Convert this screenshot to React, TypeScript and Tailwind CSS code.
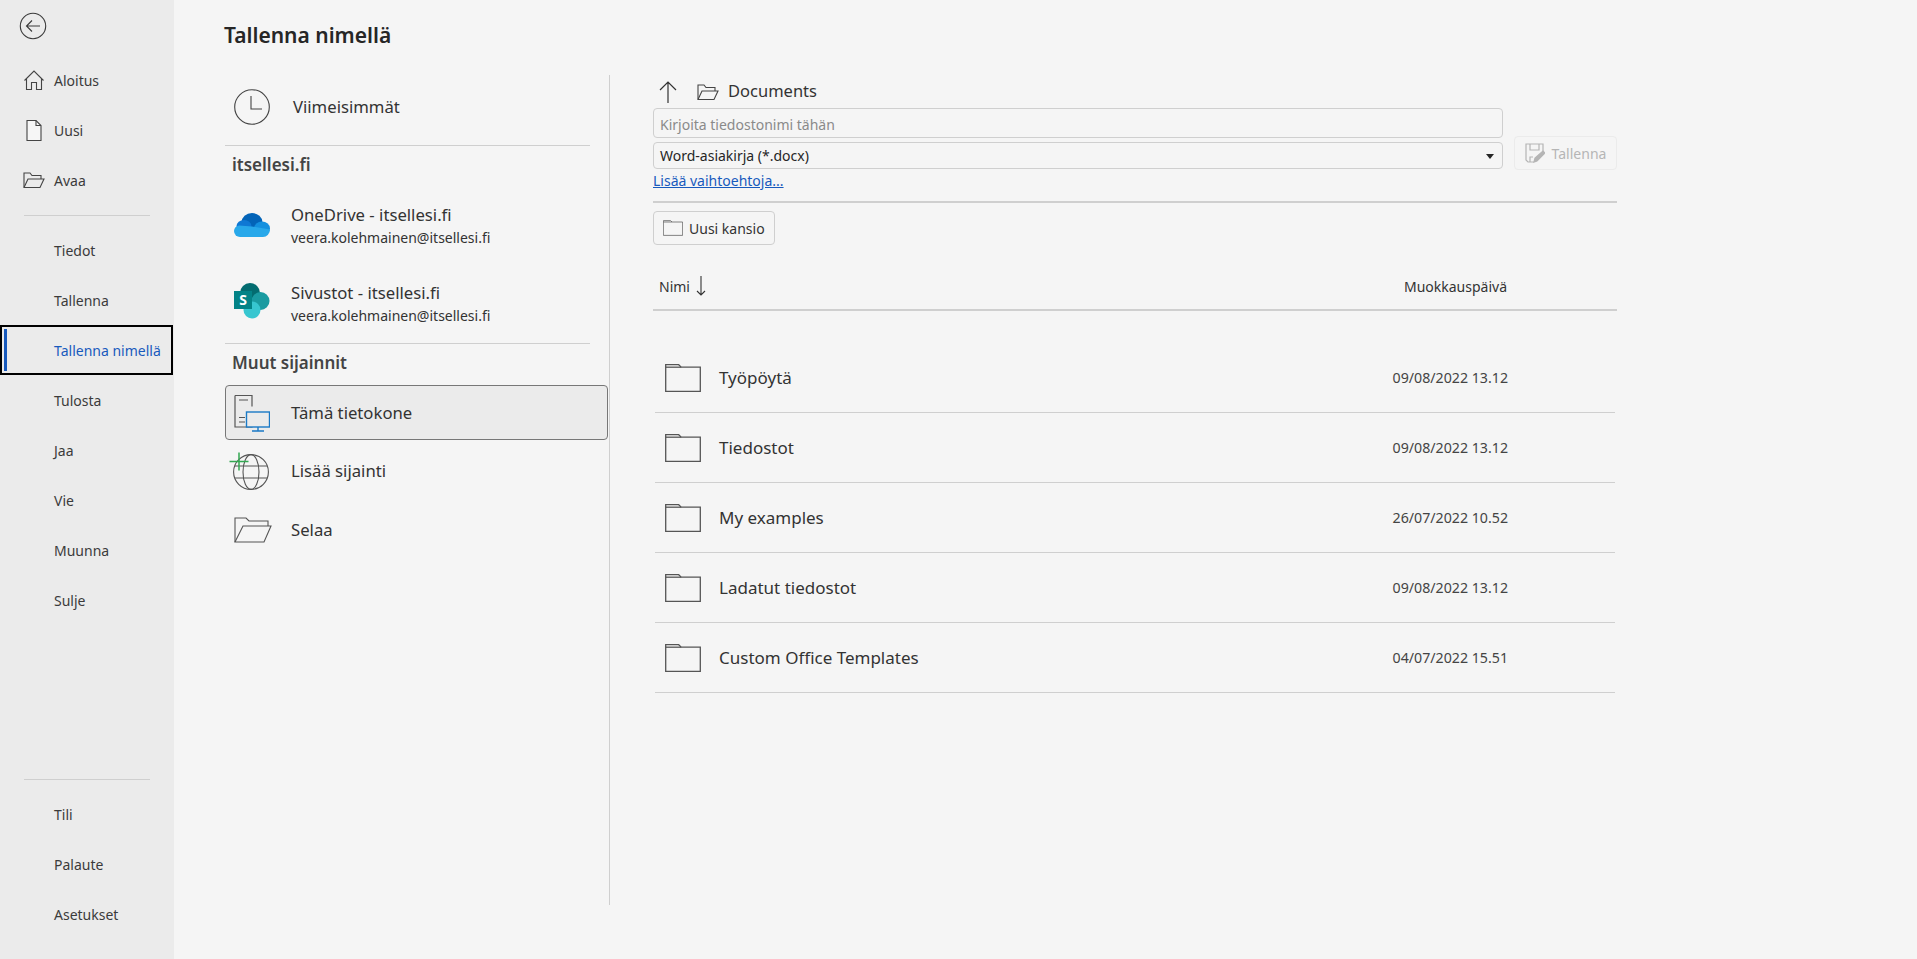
const FONT = "font-['Noto_Sans','Open_Sans',sans-serif]";

const BackIcon = () => (
  <svg width="28" height="28" viewBox="0 0 28 28" fill="none" stroke="#3a3a3a">
    <circle cx="14" cy="14" r="12.7" strokeWidth="1.1" />
    <path d="M7.500 14H21M13 8.500L7.500 14l5.500 5.500" strokeWidth="1.1" />
  </svg>
);

const HomeIcon = () => (
  <svg width="22" height="22" viewBox="0 0 22 22" fill="none" stroke="#444" strokeWidth="1.1">
    <path d="M1.500 11.500L11 2l9.500 9.500M3.500 10v10.500h5v-7h5v7h5V10" />
  </svg>
);

const PageIcon = () => (
  <svg width="18" height="22" viewBox="0 0 18 22" fill="#f6f6f6" stroke="#444" strokeWidth="1.1">
    <path d="M2 1.500h9l5 5v15H2z" />
    <path d="M11 1.500v5h5" fill="none" />
  </svg>
);

const OpenFolderIcon = ({ size = 22 }: { size?: number }) => (
  <svg width={size} height={(size * 18) / 22} viewBox="0 0 22 18" fill="none" stroke="#444" strokeWidth="1.1">
    <path d="M1 16V2h6l2 2.500h9V8" />
    <path d="M1 16.500h16L21 8H5z" />
  </svg>
);

const ClockIcon = () => (
  <svg width="36" height="36" viewBox="0 0 36 36" fill="none" stroke="#444" strokeWidth="1.1">
    <circle cx="18" cy="18" r="17.300" />
    <path d="M17 7v13h11" />
  </svg>
);

const OneDriveIcon = () => (
  <svg width="36" height="24" viewBox="0 0 36 24">
    <ellipse cx="18" cy="9.500" rx="10.500" ry="9.500" fill="#0364b8" />
    <ellipse cx="10" cy="13" rx="7.500" ry="6" fill="#0f78d4" />
    <ellipse cx="28" cy="15.500" rx="8" ry="7" fill="#1490df" />
    <path d="M0 18a6 6 0 0 1 5-5.500L18 13.500 36 16.500a7.500 7.500 0 0 1-7 7.500H6a6 6 0 0 1-6-6z" fill="#28a8ea" />
  </svg>
);

const SharePointIcon = () => (
  <svg width="36" height="36" viewBox="0 0 36 36">
    <circle cx="16" cy="10" r="10" fill="#036c70" />
    <circle cx="26.500" cy="18" r="9" fill="#1a9ba1" />
    <circle cx="18" cy="27" r="8.500" fill="#37c6d0" />
    <rect x="0" y="8" width="18" height="18" fill="#038387" />
    <text x="9" y="22" textAnchor="middle" fontSize="14" fontWeight="700" fill="#fff" fontFamily="Noto Sans, sans-serif">S</text>
  </svg>
);

const ComputerIcon = () => (
  <svg width="36" height="38" viewBox="0 0 36 38" fill="none">
    <path d="M1 1.500h17v11M18 28v5H1V1.500" stroke="#555" strokeWidth="1.2" />
    <path d="M5 6h9M5 23.500h6M5 28h6" stroke="#555" strokeWidth="1.2" />
    <rect x="12.500" y="18" width="23" height="15" fill="#ebebeb" stroke="#1b7ac6" strokeWidth="1.4" />
    <path d="M24 33v4M18 37h12" stroke="#1b7ac6" strokeWidth="1.4" />
  </svg>
);

const GlobeIcon = () => (
  <svg width="40" height="38" viewBox="0 0 40 38" fill="none">
    <circle cx="22" cy="20" r="17.400" stroke="#555" strokeWidth="1.1" />
    <ellipse cx="22" cy="20" rx="8" ry="17.400" stroke="#555" strokeWidth="1.1" />
    <path d="M6 14h32M6 26h32" stroke="#555" strokeWidth="1.1" />
    <path d="M10 .5v18M.5 9.500h19" stroke="#33a852" strokeWidth="1.5" />
  </svg>
);

const BrowseIcon = () => (
  <svg width="38" height="26" viewBox="0 0 38 26" fill="none" stroke="#555" strokeWidth="1.1">
    <path d="M1 25V1h11l3 3h19v5" />
    <path d="M1 25h29l7-16H9z" />
  </svg>
);

const SmallFolder = ({ w, h }: { w: number; h: number }) => (
  <svg width={w} height={h} viewBox="0 0 36 28" fill="none" stroke="#555" strokeWidth="1.3">
    <path d="M.7 27.300V.7h13l2.500 2.500h19.100v24.100z" />
    <path d="M.7 3.200h15.500" />
  </svg>
);

const SaveIcon = () => (
  <svg width="20" height="20" viewBox="0 0 20 20" fill="none" stroke="#b5b5b5" strokeWidth="1.2">
    <path d="M9 19H3l-2-2V1h17v7" />
    <path d="M5 1v6h9V1M5 19v-5h3" />
    <path d="M9 19l1-4 8-7 2 2-8 8z" fill="#b5b5b5" />
  </svg>
);

const NavItem = ({ label, icon, active }: { label: string; icon?: React.ReactNode; active?: boolean }) => (
  <div
    className={`relative flex h-[50px] w-[173px] items-center text-[14px] ${
      active ? 'border-2 border-black pl-[52px] text-[#185abd]' : 'pl-[54px] text-[#3b3b3b]'
    }`}
  >
    {active && <span className="absolute left-[2px] top-[2px] h-[42px] w-[3px] bg-[#185abd]" />}
    {icon && <span className="absolute left-[22px] flex w-[24px] justify-center">{icon}</span>}
    {label}
  </div>
);

const PlaceRow = ({ icon, title, sub, first }: { icon: React.ReactNode; title: string; sub: string; first?: boolean }) => (
  <div className={`flex h-[79px] items-center ${first ? 'pt-[3px]' : ''}`}>
    {icon}
    <div>
      <div className="text-[16.7px] leading-[22px] text-[#333]">{title}</div>
      <div className="mt-[2px] text-[14px] leading-[20px] text-[#333]">{sub}</div>
    </div>
  </div>
);

const folders = [
  { name: 'Työpöytä', date: '09/08/2022 13.12' },
  { name: 'Tiedostot', date: '09/08/2022 13.12' },
  { name: 'My examples', date: '26/07/2022 10.52' },
  { name: 'Ladatut tiedostot', date: '09/08/2022 13.12' },
  { name: 'Custom Office Templates', date: '04/07/2022 15.51' },
];

export default function App() {
  return (
    <div className={`flex h-[959px] w-full overflow-hidden bg-[#f5f5f5] ${FONT}`}>
      {/* Sidebar */}
      <aside className="flex w-[174px] shrink-0 flex-col bg-[#ebebeb]">
        <div className="h-[55px] pl-[19px] pt-[12px]">
          <BackIcon />
        </div>
        <NavItem label="Aloitus" icon={<HomeIcon />} />
        <NavItem label="Uusi" icon={<PageIcon />} />
        <NavItem label="Avaa" icon={<OpenFolderIcon />} />
        <div className="mx-[24px] mb-[9px] mt-[10px] h-px bg-[#cfcfcf]" />
        <NavItem label="Tiedot" />
        <NavItem label="Tallenna" />
        <NavItem label="Tallenna nimellä" active />
        <NavItem label="Tulosta" />
        <NavItem label="Jaa" />
        <NavItem label="Vie" />
        <NavItem label="Muunna" />
        <NavItem label="Sulje" />
        <div className="mt-auto pb-[20px]">
          <div className="mx-[24px] mb-[9px] h-px bg-[#cfcfcf]" />
          <NavItem label="Tili" />
          <NavItem label="Palaute" />
          <NavItem label="Asetukset" />
        </div>
      </aside>

      {/* Main */}
      <main className="flex-1 pl-[50px]">
        <h1 className="h-[75px] pt-[19px] text-[21px] font-semibold leading-[32px] text-[#262626]">Tallenna nimellä</h1>
        <div className="flex">
          {/* Places */}
          <div className="ml-[1px] h-[830px] w-[385px] border-r border-[#cfcfcf]">
            <div className="flex h-[70px] items-center pb-[7px]">
              <span className="flex w-[68px] pl-[9px]">
                <ClockIcon />
              </span>
              <span className="text-[16.7px] text-[#333]">Viimeisimmät</span>
            </div>
            <div className="h-px w-[365px] bg-[#cfcfcf]" />
            <div className="flex h-[39px] items-center pb-[2px] pl-[7px] text-[17px] font-semibold text-[#444]">itsellesi.fi</div>
            <PlaceRow
              first
              icon={
                <span className="mb-[3px] flex w-[66px] pl-[9px]">
                  <OneDriveIcon />
                </span>
              }
              title="OneDrive - itsellesi.fi"
              sub="veera.kolehmainen@itsellesi.fi"
            />
            <PlaceRow
              icon={
                <span className="mb-[5px] flex w-[66px] pl-[9px]">
                  <SharePointIcon />
                </span>
              }
              title="Sivustot - itsellesi.fi"
              sub="veera.kolehmainen@itsellesi.fi"
            />
            <div className="h-px w-[365px] bg-[#cfcfcf]" />
            <div className="flex h-[41px] items-center pb-[3px] pl-[7px] text-[17px] font-semibold text-[#444]">Muut sijainnit</div>
            <div className="flex h-[55px] w-[383px] items-center rounded-[4px] border border-[#777] bg-[#ebebeb]">
              <span className="flex w-[65px] pl-[8px]">
                <ComputerIcon />
              </span>
              <span className="text-[16.7px] text-[#333]">Tämä tietokone</span>
            </div>
            <div className="mt-[1px] flex h-[59px] items-center">
              <span className="flex w-[66px] pl-[4px]">
                <GlobeIcon />
              </span>
              <span className="text-[16.7px] text-[#333]">Lisää sijainti</span>
            </div>
            <div className="flex h-[59px] items-center">
              <span className="flex w-[66px] pl-[9px]">
                <BrowseIcon />
              </span>
              <span className="text-[16.7px] text-[#333]">Selaa</span>
            </div>
          </div>

          {/* File pane */}
          <div className="ml-[43px] w-[964px]">
            <div className="flex h-[33px] items-center">
              <svg width="18" height="22" viewBox="0 0 18 22" fill="none" stroke="#333" strokeWidth="1.2" className="ml-[6px]">
                <path d="M9 22V1M1 9l8-8 8 8" />
              </svg>
              <span className="ml-[20px] flex">
                <OpenFolderIcon />
              </span>
              <span className="ml-[9px] text-[16.5px] text-[#333]">Documents</span>
            </div>
            <div className="flex">
              <div className="w-[850px]">
                <div className="flex h-[30px] items-center rounded-[4px] border border-[#cfcfcf] pl-[6px] pt-[2px] text-[14px] text-[#8a8a8a]">
                  Kirjoita tiedostonimi tähän
                </div>
                <div className="relative mt-[4px] flex h-[27px] items-center rounded-[4px] border border-[#cfcfcf] pl-[6px] text-[14px] text-[#262626]">
                  Word-asiakirja (*.docx)
                  <span className="absolute right-[8px] top-[11px] h-0 w-0 border-x-[4px] border-t-[5px] border-x-transparent border-t-[#262626]" />
                </div>
              </div>
              <div className="ml-[11px] mt-[28px] flex h-[34px] w-[103px] items-center justify-center gap-[7px] rounded-[4px] border border-[#ebebeb] text-[14px] text-[#b5b5b5]">
                <SaveIcon />
                Tallenna
              </div>
            </div>
            <a className="block h-[21px] text-[14px] leading-[21px] text-[#185abd] underline">Lisää vaihtoehtoja...</a>
            <div className="mt-[10px] h-[2px] bg-[#cfcfcf]" />
            <div className="mt-[8px] flex h-[34px] w-[122px] items-center gap-[6px] rounded-[4px] border border-[#cfcfcf] pl-[9px] text-[14px] text-[#333]">
              <SmallFolder w={20} h={16} />
              Uusi kansio
            </div>
            <div className="relative mt-[18px] flex h-[48px] items-center border-b-2 border-[#cfcfcf] text-[14px] text-[#333]">
              <span className="ml-[6px]">Nimi</span>
              <svg width="10" height="20" viewBox="0 0 10 20" fill="none" stroke="#333" strokeWidth="1.1" className="ml-[6px]">
                <path d="M5 0v19M1 15l4 4 4-4" />
              </svg>
              <span className="ml-auto mr-[110px]">Muokkauspäivä</span>
            </div>
            <div className="mx-[2px] mt-[32px] w-[960px]">
              {folders.map((f) => (
                <div key={f.name} className="flex h-[70px] items-center border-b border-[#cfcfcf] pl-[10px]">
                  <SmallFolder w={36} h={28} />
                  <span className="ml-[18px] text-[17px] text-[#333]">{f.name}</span>
                  <span className="ml-auto mr-[107px] text-[14.2px] text-[#444]">{f.date}</span>
                </div>
              ))}
            </div>
          </div>
        </div>
      </main>
    </div>
  );
}
